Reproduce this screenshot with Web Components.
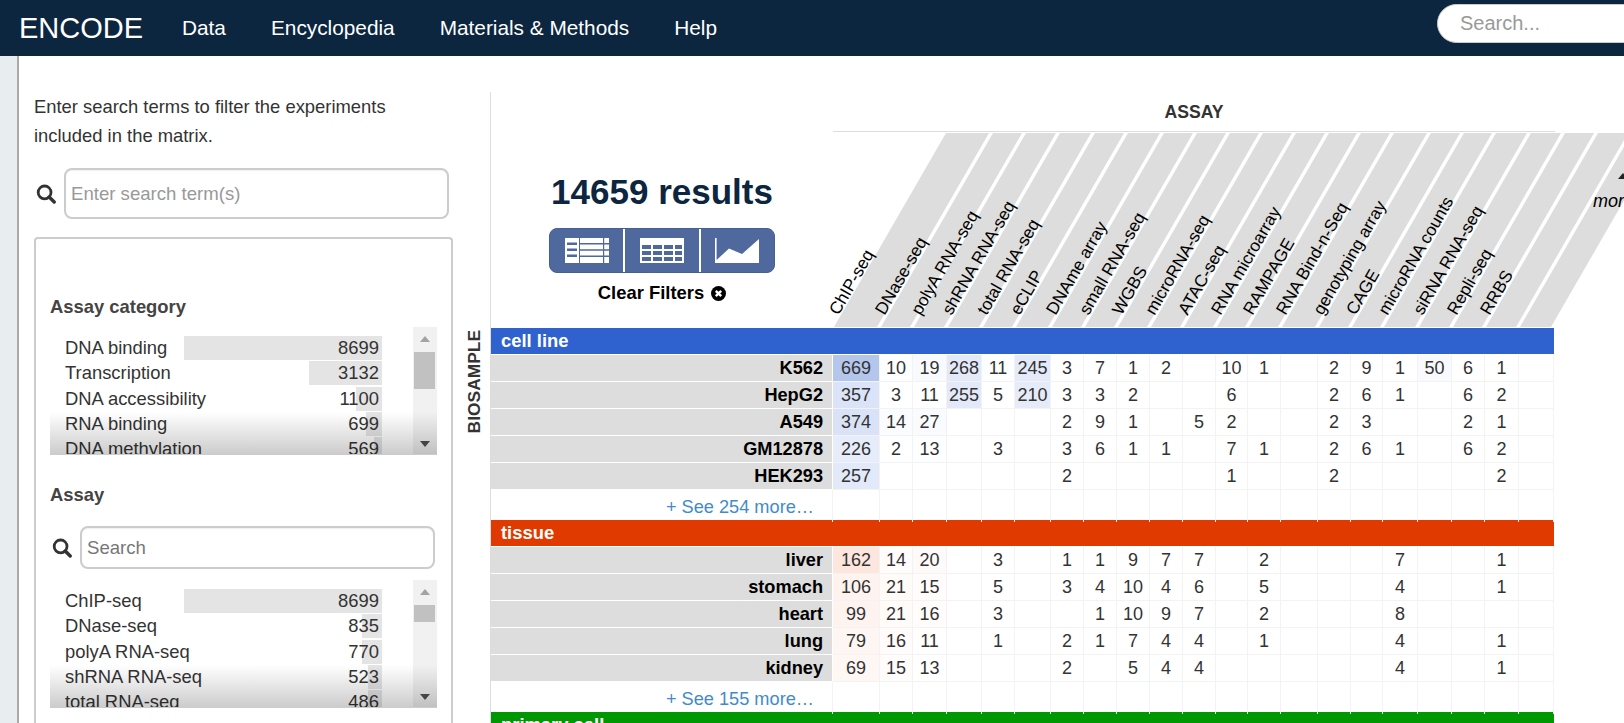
<!DOCTYPE html>
<html lang="en"><head><meta charset="utf-8"><title>ENCODE Matrix</title>
<style>
html,body{margin:0;height:723px;overflow:hidden;background:#fff}
body{font:18px/1.6 "Liberation Sans",Arial,sans-serif;color:#333}
</style></head>
<body>
<enc-app></enc-app>
<script>
const SEARCH_ICON = s => `<svg width="${s}" height="${s}" viewBox="0 0 20 20" aria-hidden="true"><circle cx="8.6" cy="8.4" r="6.4" fill="none" stroke="#333" stroke-width="2.8"/><path d="M13.2 13l5 5" stroke="#333" stroke-width="3.4" stroke-linecap="round"/></svg>`;

class EncHeader extends HTMLElement{
  constructor(){super();this.attachShadow({mode:'open'}).innerHTML=`<style>
  :host{display:flex;align-items:center;height:56px;background:#0c2640;color:#fff;flex:none;overflow:hidden}
  .brand{font-size:29px;margin-left:19px;width:163px;line-height:50px}
  nav{display:flex;gap:45px;font-size:20.8px;flex:1}
  .search{margin-right:-40px;width:227px;height:39px;box-sizing:border-box;margin-top:-9px;background:#fff;border:1px solid #ccc;border-radius:20px;padding-left:22px;color:#999;font-size:20px;line-height:36px}
  </style><div class="brand">ENCODE</div><nav><span>Data</span><span>Encyclopedia</span><span>Materials &amp; Methods</span><span>Help</span></nav><div class="search">Search...</div>`}
}
customElements.define('enc-header',EncHeader);

class EncSearch extends HTMLElement{
  constructor(){super();const h=this.getAttribute('h')||51;this.attachShadow({mode:'open'}).innerHTML=`<style>
  :host{display:flex;align-items:center;gap:8px}
  svg{flex:none}
  .box{flex:1;height:${h}px;box-sizing:border-box;border:2px solid #ccc;border-radius:8px;padding-left:5px;color:${this.getAttribute('tone')||'#999'};font-size:18.6px;display:flex;align-items:center;box-shadow:inset 0 1px 1px rgba(0,0,0,.06)}
  </style>${SEARCH_ICON(20)}<div class="box">${this.getAttribute('text')}</div>`}
}
customElements.define('enc-search',EncSearch);

class EncFacet extends HTMLElement{
  set data(d){
    const max=198;
    this.attachShadow({mode:'open'}).innerHTML=`<style>
    :host{display:block}
    .wrap{position:relative;display:flex;height:128px;overflow:hidden}
    .list{flex:1;padding:9px 31px 0 15px}
    .row{height:24px;margin-bottom:1.33px;display:flex;justify-content:space-between;align-items:center;font-size:18.4px;line-height:24px;padding-right:3px;background:linear-gradient(#e4e4e4,#e4e4e4) right/var(--w) 100% no-repeat}
    .sb{width:24px;background:#f1f1f1;position:relative;flex:none;display:flex;flex-direction:column;align-items:center}
    .up,.dn{width:0;height:0;border:5px solid transparent;border-top-width:0;border-bottom:6px solid #a3a3a3;margin-top:9px}
    .dn{border-bottom-width:0;border-top:6px solid #505050;margin:auto 0 8px}
    .th{position:absolute;left:1px;right:2px;background:#c1c1c1;top:var(--t);height:var(--h)}
    .fade{position:absolute;left:0;right:0;bottom:0;height:43px;background:linear-gradient(rgba(0,0,0,0),rgba(0,0,0,.2));border-bottom:1px solid #ccc;box-sizing:border-box}
    </style><div class="wrap" style="--t:${d.t}px;--h:${d.h}px"><div class="list">${d.rows.map(r=>`<div class="row" style="--w:${r[2]}px"><span>${r[0]}</span><span>${r[1]}</span></div>`).join('')}</div><div class="sb"><div class="up"></div><div class="th"></div><div class="dn"></div></div><div class="fade"></div></div>`;
  }
}
customElements.define('enc-facet',EncFacet);

class EncSidebar extends HTMLElement{
  constructor(){super();this.attachShadow({mode:'open'}).innerHTML=`<style>
  :host{display:block;width:419px;flex:none;padding-top:38px}
  p{margin:0 0 18px;font-size:18.4px;line-height:29px;color:#333}
  .box{margin-top:18px;height:600px;box-sizing:border-box;border:2px solid #ccc;border-bottom:0;border-radius:4px 4px 0 0;padding:53px 14px 0}
  h4{margin:0 0 6px;font-size:18.4px;line-height:29px;color:#444}
  .h2{margin-top:25px;margin-bottom:17px}
  .s2{margin:0 2px 11px 2px}
  </style><p>Enter search terms to filter the experiments<br>included in the matrix.</p>
  <enc-search text="Enter search term(s)" style="margin-left:2px;margin-right:4px"></enc-search>
  <div class="box"><h4>Assay category</h4><enc-facet id="a"></enc-facet><h4 class="h2">Assay</h4><enc-search class="s2" h="43" text="Search" tone="#777"></enc-search><enc-facet id="b"></enc-facet></div>`;
  const $=i=>this.shadowRoot.getElementById(i);
  $('a').data={t:25,h:37,rows:[['DNA binding','8699',198],['Transcription','3132',73],['DNA accessibility','1100',26],['RNA binding','699',16],['DNA methylation','569',8]]};
  $('b').data={t:25,h:17,rows:[['ChIP-seq','8699',198],['DNase-seq','835',20],['polyA RNA-seq','770',20],['shRNA RNA-seq','523',14],['total RNA-seq','486',14]]};
  }
}
customElements.define('enc-sidebar',EncSidebar);

const COLS=[47,33,34,35,33,36,33,33,33,33,33,32,33,37,33,32,35,34,33,34,35];
const TEMPLATE='342px '+COLS.map(c=>c+'px').join(' ');
const ASSAYS=['ChIP-seq','DNase-seq','polyA RNA-seq','shRNA RNA-seq','total RNA-seq','eCLIP','DNAme array','small RNA-seq','WGBS','microRNA-seq','ATAC-seq','RNA microarray','RAMPAGE','RNA Bind-n-Seq','genotyping array','CAGE','microRNA counts','siRNA RNA-seq','Repli-seq','RRBS'];

class EncResults extends HTMLElement{
  constructor(){super();this.attachShadow({mode:'open'}).innerHTML=`<style>
  :host{display:flex;flex-direction:column;align-items:center;color:#000}
  h2{margin:0;font-size:35px;line-height:50px;color:#0c2640;margin-top:75px}
  .btns{display:flex;width:226px;height:45px;margin-top:11px;background:#4f689e;border-radius:8px;box-sizing:border-box;border:1px solid #46608f}
  .btns div{flex:1;display:flex;align-items:center;justify-content:center;border-left:2px solid #fff}
  .btns div:first-child{border-left:0}
  .cl{display:flex;align-items:center;gap:7px;font-weight:700;font-size:18.4px;line-height:26px;margin-top:7px}
  </style><h2>14659 results</h2><div class="btns">
  <div><svg width="44" height="25" viewBox="0 0 44 25"><path fill="#fff" d="M0 0h14v25H0zM15 0h28v25H15z"/><path fill="#fff" d="M38 0h6v25h-6z"/><path fill="#4f689e" d="M2 4.5h10v2.5H2zM2 10.5h10v2.5H2zM2 16.5h10v2.5H2zM15 5h29v1.6H15zM15 11.2h29v1.6H15zM15 17.4h29v1.6H15zM38 0h1.2v25H38zM14 0h1v25h-1z"/></svg></div>
  <div><svg width="44" height="25" viewBox="0 0 44 25"><path fill="#fff" d="M0 0h44v25H0z"/><path fill="#4f689e" d="M2 7h9v4H2zM13 7h9v4h-9zM24 7h9v4h-9zM35 7h7v4h-7zM2 13h9v4H2zM13 13h9v4h-9zM24 13h9v4h-9zM35 13h7v4h-7zM2 19h9v4H2zM13 19h9v4h-9zM24 19h9v4h-9zM35 19h7v4h-7z"/></svg></div>
  <div><svg width="44" height="25" viewBox="0 0 44 25"><path fill="#fff" d="M0 0h1.6v22L14 10.500l13 5.500L44 1v24H0z"/></svg></div>
  </div><div class="cl">Clear Filters <svg width="15" height="15" viewBox="0 0 15 15"><circle cx="7.500" cy="7.500" r="7.500" fill="#000"/><path d="M4.800 4.800l5.400 5.400M10.200 4.800l-5.400 5.400" stroke="#fff" stroke-width="2.400"/></svg></div>`}
}
customElements.define('enc-results',EncResults);

class EncCategory extends HTMLElement{
  constructor(){super();this.attachShadow({mode:'open'}).innerHTML=`<style>
  :host{display:flex;align-items:center;height:26px;margin-bottom:1px;width:1063px;background:var(--c);color:#fff;font-weight:700;font-size:18.4px;padding-left:10px;box-sizing:border-box;white-space:nowrap}
  </style><slot></slot>`}
}
customElements.define('enc-category',EncCategory);

class EncRow extends HTMLElement{
  constructor(){super();this.attachShadow({mode:'open'})}
  set data(d){
    const [name,vals,shades]=d;
    this.shadowRoot.innerHTML=`<style>
    :host{display:grid;grid-template-columns:${TEMPLATE};height:27px;font-size:18px;line-height:26px}
    .n{background:#ddd;color:#000;font-weight:700;text-align:right;padding-right:9px;border-bottom:1px solid #fff;border-right:1px solid #fff;box-sizing:border-box;font-size:18.2px}
    .c{text-align:center;border-right:1px solid #f3f3f3;border-bottom:1px solid #f3f3f3;box-sizing:border-box;color:#333;white-space:nowrap}
    </style><div class="n">${name}</div>${vals.map((v,i)=>`<div class="c"${shades[v+'@'+i]||shades[i]?` style="background:${shades[i]}"`:''}>${v}</div>`).join('')}`;
  }
}
customElements.define('enc-row',EncRow);

class EncMore extends HTMLElement{
  constructor(){super();this.attachShadow({mode:'open'}).innerHTML=`<style>
  :host{display:grid;grid-template-columns:${TEMPLATE};height:30px;line-height:30px;font-size:18.2px}
  .n{color:#428bca;text-align:right;padding-right:18px;padding-top:2px;box-sizing:border-box;border-right:1px solid #f3f3f3}
  .c{border-right:1px solid #f3f3f3}
  </style><div class="n"><slot></slot></div>${COLS.map(()=>'<div class="c"></div>').join('')}`}
}
customElements.define('enc-more',EncMore);

class EncAssayHead extends HTMLElement{
  constructor(){super();
    const cell=(t,i)=>{
      const off=i==0?9:i==2?11:8;
      return `<div class="cell"><div class="band"></div>${t?`<span class="t" style="left:${off}px">${t}</span>`:''}${i==20?'<span class="m"><i class="ar"></i>more</span>':''}</div>`};
    this.attachShadow({mode:'open'}).innerHTML=`<style>
    :host{display:grid;grid-template-columns:${COLS.map(c=>c+'px').join(' ')};height:194px;margin-top:0}
    .cell{position:relative;height:194px;color:#000}
    .band{height:100%;background:#ddd;margin-right:3px;margin-left:1px;transform:skewX(-30deg);transform-origin:0 100%}
    .t{position:absolute;bottom:9px;white-space:nowrap;font-size:17.2px;line-height:20px;transform-origin:0 100%;transform:rotate(-60deg)}
    .m{position:absolute;left:74px;top:58px;font-style:italic;font-size:18px;line-height:20px}
    .ar{position:absolute;left:25px;top:-18px;border:5px solid transparent;border-top:0;border-bottom:6px solid #222}
    </style>${ASSAYS.concat(['']).map(cell).join('')}`}
}
customElements.define('enc-assay-head',EncAssayHead);

const blue={};
class EncMatrix extends HTMLElement{
  constructor(){super();this.attachShadow({mode:'open'}).innerHTML=`<style>
  :host{display:block;flex:none;width:1134px;height:665px;margin-top:38px;border-left:1px solid #ddd;overflow:hidden}
  .top{display:grid;grid-template-columns:342px 1fr;height:236px}
  .assay{display:flex;justify-content:center;width:722px;height:40px;box-sizing:border-box;border-bottom:1px solid #ddd;align-items:center;font-weight:700;font-size:17.6px;color:#333;padding-top:1px}
  .gap{height:1px}
  </style><div class="top"><enc-results></enc-results><div><div class="assay">ASSAY</div><div class="gap"></div><enc-assay-head></enc-assay-head></div></div>
  <div id="body"></div>`;
  const B=this.shadowRoot.getElementById('body');
  const add=(tag,txt,c)=>{const e=document.createElement(tag);e.textContent=txt;if(c)e.style.setProperty('--c',c);B.appendChild(e);return e};
  const row=(name,str,sh)=>{const e=document.createElement('enc-row');B.appendChild(e);e.data=[name,str.split(','),sh]};
  add('enc-category','cell line','#2f62cf');
  row('K562','669,10,19,268,11,245,3,7,1,2,,10,1,,2,9,1,50,6,1,',{0:'#b4c6ec',1:'#fdfeff',2:'#f9fafe',3:'#e3e9f9',4:'#fdfeff',5:'#e4eaf9',17:'#f9fafe'});
  row('HepG2','357,3,11,255,5,210,3,3,2,,,6,,,2,6,1,,6,2,',{0:'#dae3f7',3:'#e3e9f9',5:'#e6ebf9'});
  row('A549','374,14,27,,,,2,9,1,,5,2,,,2,3,,,2,1,',{0:'#d9e2f6',1:'#fbfcff',2:'#fafbfe'});
  row('GM12878','226,2,13,,3,,3,6,1,1,,7,1,,2,6,1,,6,2,',{0:'#e6ecfa',2:'#fdfeff'});
  row('HEK293','257,,,,,,2,,,,,1,,,2,,,,,2,',{0:'#e2e9f9'});
  add('enc-more','+ See 254 more…');
  add('enc-category','tissue','#e03a00');
  row('liver','162,14,20,,3,,1,1,9,7,7,,2,,,,7,,,1,',{0:'#fde6dd',1:'#fffcfb',2:'#fefaf9'});
  row('stomach','106,21,15,,5,,3,4,10,4,6,,5,,,,4,,,1,',{0:'#fef3ee',1:'#fefbf9',2:'#fffcfb'});
  row('heart','99,21,16,,3,,,1,10,9,7,,2,,,,8,,,,',{0:'#fef3ef',1:'#fefbf9',2:'#fffcfb'});
  row('lung','79,16,11,,1,,2,1,7,4,4,,1,,,,4,,,1,',{0:'#fef6f2',1:'#fffcfb'});
  row('kidney','69,15,13,,,,2,,5,4,4,,,,,,4,,,1,',{0:'#fef7f3',1:'#fffcfb'});
  add('enc-more','+ See 155 more…');
  add('enc-category','primary cell','#009802');
  }
}
customElements.define('enc-matrix',EncMatrix);

class EncApp extends HTMLElement{
  constructor(){super();this.attachShadow({mode:'open'}).innerHTML=`<style>
  :host{display:block;height:723px;overflow:hidden}
  .main{display:flex;height:667px;overflow:hidden}
  .strip{width:17px;flex:none;background:#e8edf0;border-right:2px solid #aaa}
  .content{flex:1;display:flex;min-width:0;padding-left:15px;position:relative}
  .rule{height:2px;background:#ccc;margin-left:34px;width:1533px}
  .bio{flex:none;width:37px;display:flex;justify-content:center;align-items:flex-end;height:319px;box-sizing:border-box;padding-top:0}
  .bio span{writing-mode:vertical-rl;transform:rotate(180deg);font-weight:700;font-size:17.4px;line-height:20px;color:#333;margin-bottom:-58px;margin-left:4px}
  .hold{height:261px}
  </style><enc-header></enc-header>
  <div class="main"><div class="strip"></div><div class="content" style="flex-direction:column;padding:0"><div class="rule" style="margin-left:15px"></div><div style="display:flex;padding-left:15px"><enc-sidebar style="padding-top:36px"></enc-sidebar><div class="bio"><span>BIOSAMPLE</span></div><enc-matrix style="margin-top:36px"></enc-matrix></div></div></div>`}
}
customElements.define('enc-app',EncApp);
</script>
</body></html>
